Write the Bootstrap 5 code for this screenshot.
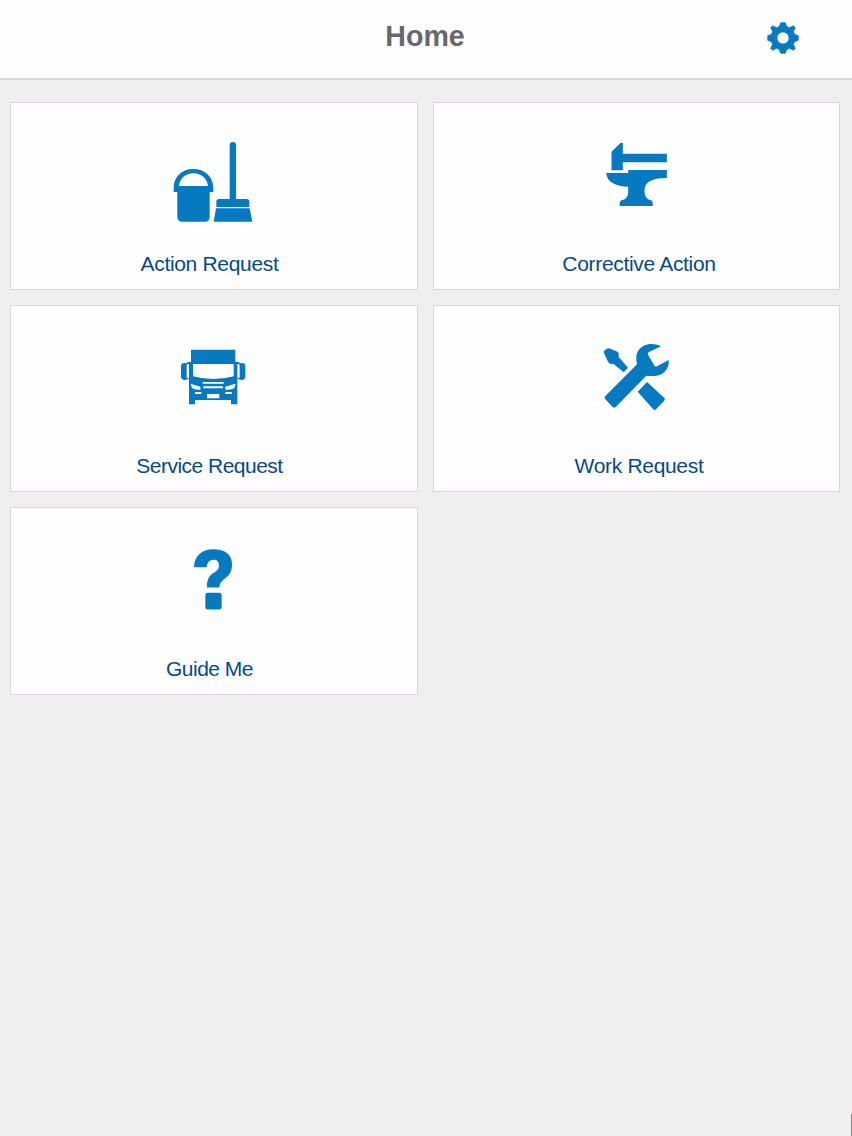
<!DOCTYPE html>
<html lang="en">
<head>
<meta charset="utf-8">
<meta name="viewport" content="width=device-width, initial-scale=1">
<title>Home</title>
<link href="https://cdn.jsdelivr.net/npm/bootstrap@5.3.0/dist/css/bootstrap.min.css" rel="stylesheet">
<style>
body{background:#f0eef1;font-family:"Liberation Sans",Arial,sans-serif;min-height:100vh;overflow:hidden}
.topbar{height:80px;background:#fefefe;border-bottom:2px solid #d8d7d9;padding:0}
.topbar h1{font-size:28.6px;line-height:32px;color:#69676b;margin:-7px 2px 0 0}
.gear{right:51px;top:20px;width:36px;height:36px}
.tiles{display:grid;grid-template-columns:408px 407px;grid-auto-rows:187.5px;gap:15px;padding:22px 12px 0 10px}
.tile{border:1.5px solid #d7d6d9;border-radius:0;background:#fefefe;color:#054a87;text-decoration:none;padding-top:27px}
.tile svg{width:110px;height:100px;fill:#0679c1}
.tile span{font-size:21px;line-height:26px;letter-spacing:-.32px;margin-top:20.5px}
.tile .tight{letter-spacing:-.52px}
.shift-l{padding-right:9px}
.shift-r{padding-left:5px}
.scroll-edge{right:0;bottom:0;width:1px;height:22px;background:#8a898b}
</style>
</head>
<body>
<header class="topbar navbar position-relative justify-content-center">
<h1 class="fw-bold">Home</h1>
<a href="#" class="gear position-absolute d-block" aria-label="Settings">
<svg class="d-block" width="36" height="36" viewBox="-54 -54 108 108" fill="#0679c1"><path fill-rule="evenodd" d="M-7-46H7L11-35 19-31 31-37 37-31 31-19 35-11 46-7V7L35 11 31 19 37 31 31 37 19 31 11 35 7 46H-7L-11 35-19 31-31 37-37 31-31 19-35 11-46 7V-7L-35-11-31-19-37-31-31-37-19-31-11-35ZM0-18A18 18 0 1 0 0 18 18 18 0 1 0 0-18Z" stroke="#0679c1" stroke-width="2" stroke-linejoin="round"/></svg>
</a>
</header>
<main class="tiles">
<a href="#" class="tile card align-items-center">
<svg viewBox="-3 0 330 300"><path fill-rule="evenodd" d="M41 186V174C41 140 66 117 100 117S160 140 160 174V186H149V262Q148 274 137 275H64Q53 274 52 262V186ZM57 168H144C141 145 124 130 100 130S60 145 57 168Z"/><path d="M209 207V46Q209 36 218.500 36T228 46V207H260Q268 207 268 215V231H169V215Q169 207 177 207ZM168 235H269L277 275H161Z"/></svg>
<span class="shift-l">Action Request</span></a>
<a href="#" class="tile card align-items-center">
<svg viewBox="-24.5 0 330 300"><path d="M64 121V65L91 39H98V71H230V97H98V121ZM48 129H114V120H230V144C190 144 163 153 163 182C163 199 170 208 183 211Q188 213 188 228H88Q88 213 94 211C109 208 114 200 114 184V170C79 169 50 158 48 129Z"/></svg>
<span class="shift-r">Corrective Action</span></a>
<a href="#" class="tile card align-items-center">
<svg viewBox="-18 -6 330 300"><path fill-rule="evenodd" d="M78 44H211V81H221L225 85Q240 81 241 92V126Q239 135 231 135L217 132V208H198V195H90V208H72V132L59 135Q49 134 48 126V92Q50 81 64 85L69 81H78ZM68 87L65 91V128L69 130H72V87ZM217 87V130H221L224 127V91L221 87ZM84 87V124Q112 132 145 132T206 124V87ZM113 141V146H176V141ZM77 146L81 159Q89 165 106 164V155ZM212 146L181 155V164Q201 165 208 159ZM115 154V160H174V154ZM90 171V177H109V171ZM181 171V177H200V171ZM126 177V190H163V177Z"/></svg>
<span class="shift-l tight">Service Request</span></a>
<a href="#" class="tile card align-items-center">
<svg viewBox="-23 -6 330 300"><path d="M42 52Q46 41 59 40L83 50Q89 54 87 66L115 98 102 112 71 86Q60 90 55 80ZM172 141L225 190Q227 194 223 198L199 223Q195 227 190 222L144 170ZM214 34C187 20 159 27 145 48Q136 64 142 88L47 183Q42 188 47 193L69 216Q73 220 79 215L170 122C190 125 213 123 225 110C234 101 239 89 237 75L202 94Q198 96 195 93L175 59Q172 54 178 51Z"/></svg>
<span class="shift-r">Work Request</span></a>
<a href="#" class="tile card align-items-center">
<svg viewBox="-33 -13.5 330 300"><path d="M72 83C73 50 94 29 130 29C166 29 188 46 186 78C185 96 178 108 164 118Q148 129 148 144H111C110 124 115 109 133 99C143 94 147 87 147 78C147 67 141 61 130 61S111 70 110 83ZM113 160H148Q155 160 155 167V203Q155 210 148 210H113Q106 210 106 203V167Q106 160 113 160Z"/></svg>
<span class="shift-l tight">Guide Me</span></a>
</main>
<div class="scroll-edge position-fixed"></div>
<script src="https://cdn.jsdelivr.net/npm/bootstrap@5.3.0/dist/js/bootstrap.bundle.min.js"></script>
</body>
</html>
